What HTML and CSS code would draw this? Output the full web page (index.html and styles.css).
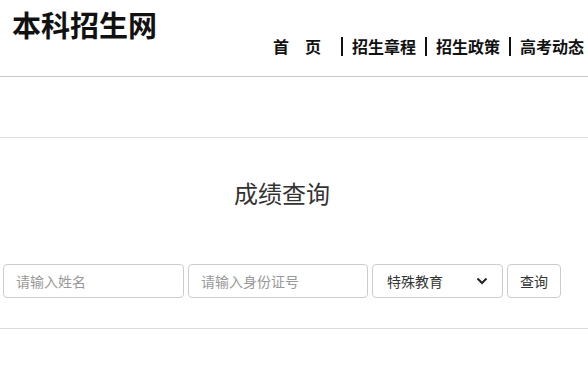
FILE: index.html
```html
<!DOCTYPE html>
<html lang="zh-CN">
<head>
<meta charset="utf-8">
<title>本科招生网</title>
<link rel="stylesheet" href="styles.css">
</head>
<body>
<header class="top">
  <h1 class="logo">本科招生网</h1>
  <nav class="nav">
    <a class="nav-item first" href="#">首&emsp;页</a>
    <a class="nav-item" href="#">招生章程</a>
    <a class="nav-item" href="#">招生政策</a>
    <a class="nav-item last" href="#">高考动态</a>
  </nav>
</header>
<div class="band"></div>
<main class="query">
  <div class="query-inner">
    <h2 class="query-title">成绩查询</h2>
    <form class="query-form">
      <input class="field name" type="text" placeholder="请输入姓名">
      <input class="field idno" type="text" placeholder="请输入身份证号">
      <div class="select-wrap">
        <select class="field kind">
          <option>特殊教育</option>
        </select>
        <svg class="chevron" width="12" height="8" viewBox="0 0 12 8"><path d="M1.5 1.5 L6 6 L10.5 1.5" fill="none" stroke="#222" stroke-width="2"/></svg>
      </div>
      <button class="btn" type="button">查询</button>
    </form>
  </div>
</main>
</body>
</html>
```
FILE: styles.css
```css
* { box-sizing: border-box; }
body {
  margin: 0;
  background: #fff;
  font-family: "Noto Sans CJK SC", "Noto Sans", sans-serif;
  color: #333;
}
.top {
  height: 77px;
  border-bottom: 1px solid #c8c8c8;
  display: flex;
  justify-content: space-between;
  align-items: flex-start;
}
.logo {
  margin: 0;
  padding: 10px 0 0 12px;
  font-size: 29px;
  line-height: 29px;
  font-weight: 700;
  color: #111;
}
.nav {
  display: flex;
  margin-top: 37px;
  padding-right: 2px;
}
.nav-item {
  display: block;
  font-size: 16px;
  line-height: 19px;
  font-weight: 700;
  color: #111;
  text-decoration: none;
  padding: 0 9px;
  border-left: 2px solid #111;
}
.nav-item.first {
  border-left: none;
  padding-right: 20px;
}
.nav-item.last { padding-right: 2px; }
.band {
  height: 61px;
  border-bottom: 1px solid #dcdcdc;
}
.query {
  padding-top: 43px;
  padding-bottom: 30px;
  border-bottom: 1px solid #dcdcdc;
}
.query-inner {
  width: 558px;
  margin-left: 3px;
}
.query-title {
  margin: 0;
  text-align: center;
  font-size: 24px;
  line-height: 24px;
  font-weight: 400;
  color: #333;
}
.query-form {
  margin-top: 59px;
  display: flex;
  gap: 4px;
}
.field {
  height: 34px;
  border: 1px solid #ccc;
  border-radius: 4px;
  padding: 0 12px;
  font-family: "Noto Sans CJK SC", sans-serif;
  font-size: 14px;
  color: #333;
  background: #fff;
  outline: none;
}
.field::placeholder { color: #999; }
.name { width: 181px; }
.idno { width: 180px; }
.select-wrap {
  position: relative;
  width: 131px;
}
.kind {
  width: 100%;
  appearance: none;
  -webkit-appearance: none;
  padding-left: 14px;
}
.chevron {
  position: absolute;
  right: 15px;
  top: 13px;
  pointer-events: none;
}
.btn {
  width: 54px;
  height: 34px;
  border: 1px solid #ccc;
  border-radius: 4px;
  background: #fff;
  font-family: "Noto Sans CJK SC", sans-serif;
  font-size: 14px;
  color: #333;
  padding: 0;
}
```
